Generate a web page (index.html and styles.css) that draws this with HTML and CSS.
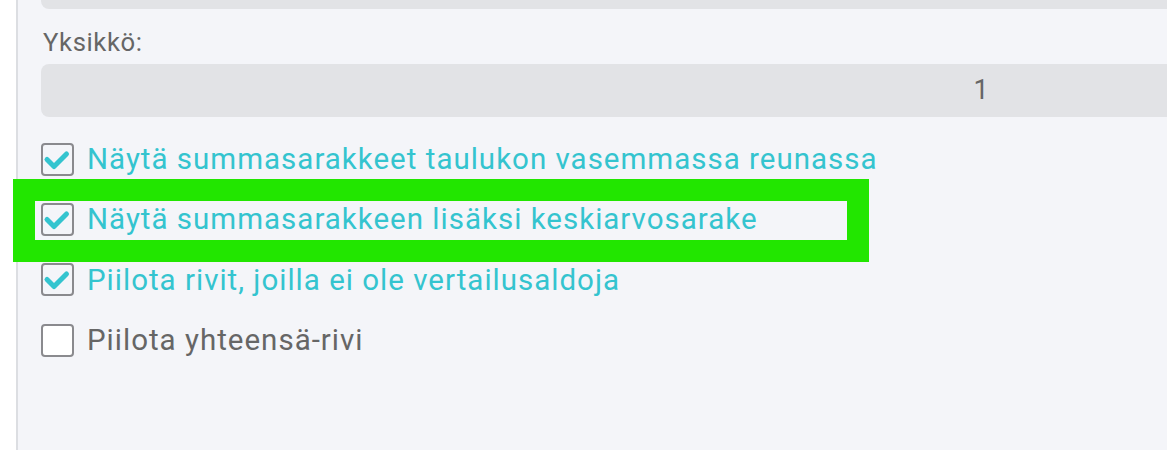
FILE: index.html
```html
<!DOCTYPE html>
<html lang="fi">
<head>
<meta charset="utf-8">
<link rel="stylesheet" href="styles.css">
</head>
<body>
<div class="panel">
  <div class="prev-input"></div>
  <label class="field-label">Yksikkö:</label>
  <div class="field-input">1</div>
  <div class="options">
    <div class="opt checked"><span class="box"><svg viewBox="0 0 33 33"><path d="M6 16.5L13 23.5L25.5 11"/></svg></span><span class="txt">Näytä summasarakkeet taulukon vasemmassa reunassa</span></div>
    <div class="opt checked"><span class="box"><svg viewBox="0 0 33 33"><path d="M6 16.5L13 23.5L25.5 11"/></svg></span><span class="txt">Näytä summasarakkeen lisäksi keskiarvosarake</span></div>
    <div class="opt checked"><span class="box"><svg viewBox="0 0 33 33"><path d="M6 16.5L13 23.5L25.5 11"/></svg></span><span class="txt">Piilota rivit, joilla ei ole vertailusaldoja</span></div>
    <div class="opt"><span class="box"></span><span class="txt">Piilota yhteensä-rivi</span></div>
  </div>
</div>
<div class="highlight"></div>
</body>
</html>
```
FILE: styles.css
```css
html, body {
  margin: 0;
  padding: 0;
  background: #ffffff;
  overflow: hidden;
  font-family: Roboto, "Liberation Sans", sans-serif;
}
body {
  position: relative;
  width: 1167px;
  height: 450px;
}
.panel {
  margin-left: 16px;
  height: 450px;
  border-left: 2px solid #dcdee2;
  background: #f4f5f9;
  padding-left: 23px;
  box-sizing: border-box;
  display: flex;
  flex-direction: column;
  overflow: hidden;
}
.prev-input {
  height: 9px;
  width: 1880px;
  flex: none;
  background: #e2e3e6;
  border-radius: 0 0 8px 8px;
}
.field-label {
  margin-top: 19px;
  margin-left: 2px;
  font-size: 25.7px;
  letter-spacing: 0.6px;
  line-height: 28px;
  color: #666666;
}
.field-input {
  margin-top: 8px;
  flex: none;
  width: 1880px;
  height: 53px;
  background: #e2e3e6;
  border-radius: 8px;
  text-align: center;
  font-size: 27px;
  line-height: 53px;
  color: #666666;
}
.options {
  margin-top: 12px;
  display: flex;
  flex-direction: column;
}
.opt {
  display: flex;
  align-items: center;
  height: 60.3px;
  gap: 13px;
}
.box {
  position: relative;
  width: 33px;
  height: 33px;
  box-sizing: border-box;
  border: 2px solid #8a8a8e;
  border-radius: 4px;
  background: #ffffff;
  flex: none;
}
.checked .box {
  background: #f4f5f9;
}
.box svg {
  display: block;
  width: 33px;
  height: 33px;
  margin: -2px;
  fill: none;
  stroke: #34c4cf;
  stroke-width: 5;
  stroke-linecap: round;
  stroke-linejoin: round;
}
.txt {
  font-size: 29.5px;
  letter-spacing: 1px;
  color: #666666;
  white-space: nowrap;
}
.checked .txt {
  color: #34c4cf;
}
.highlight {
  position: absolute;
  left: 13px;
  top: 179px;
  width: 856px;
  height: 83px;
  box-sizing: border-box;
  border-style: solid;
  border-color: #22e600;
  border-width: 22px;
}
```
